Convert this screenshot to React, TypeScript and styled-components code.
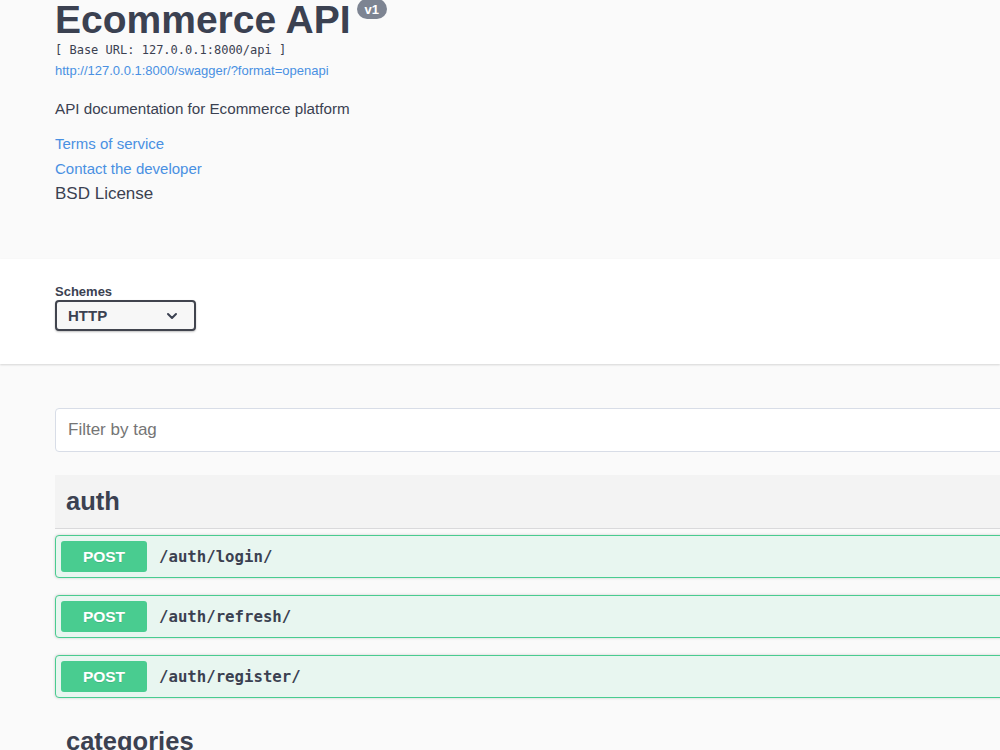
import React from "react";
import styled, { createGlobalStyle } from "styled-components";

const Global = createGlobalStyle`
  html, body { margin: 0; padding: 0; background: #fafafa; }
  body { overflow: hidden; font-family: "Liberation Sans", Arial, sans-serif; color: #3b4151; }
  #root { width: 1000px; height: 750px; overflow: hidden; }
`;

const Page = styled.div`
  width: 1000px;
  display: flex;
  flex-direction: column;
`;

const Wrap = styled.div`
  width: 1200px;
  padding-left: 55px;
  box-sizing: border-box;
`;

const Info = styled(Wrap)`
  padding-bottom: 53px;
`;

const TitleRow = styled.div`
  display: flex;
  align-items: flex-start;
`;

const Title = styled.h2`
  margin: 0;
  font-size: 39px;
  line-height: 40px;
  font-weight: 700;
  color: #3b4151;
`;

const Version = styled.span`
  margin-left: 6px;
  height: 20px;
  padding: 0 8px;
  border-radius: 57px;
  background: #7d8492;
  color: #fff;
  font-size: 13px;
  font-weight: 700;
  box-sizing: border-box;
  display: inline-flex;
  align-items: center;
  position: relative;
  top: -1px;
`;

const BaseUrl = styled.pre`
  margin: 2px 0 0;
  font-family: "DejaVu Sans Mono", "Liberation Mono", monospace;
  font-size: 12px;
  line-height: 16px;
  color: #3b4151;
`;

const Link = styled.a<{ $size?: number }>`
  display: block;
  color: #4990e2;
  text-decoration: none;
  font-size: ${(p) => p.$size ?? 15}px;
`;

const SpecLink = styled(Link)`
  margin-top: 4px;
  line-height: 18px;
`;

const Description = styled.p`
  margin: 19px 0 0;
  font-size: 15.2px;
  line-height: 20px;
  color: #3b4151;
`;

const ContactBlock = styled.div`
  margin-top: 12px;
  display: flex;
  flex-direction: column;
`;

const ContactLink = styled(Link)`
  line-height: 25px;
`;

const License = styled.div`
  font-size: 17px;
  line-height: 25px;
  color: #3b4151;
`;

const SchemeContainer = styled.div`
  background: #fff;
  box-shadow: 0 1px 2px 0 rgba(0, 0, 0, 0.15);
  padding: 25px 0 33px 55px;
`;

const SchemeLabel = styled.div`
  font-size: 13px;
  font-weight: 700;
  line-height: 16px;
  color: #3b4151;
`;

const Select = styled.div`
  width: 141px;
  height: 31px;
  box-sizing: border-box;
  border: 2px solid #41444e;
  border-radius: 4px;
  background: #f7f7f7;
  box-shadow: 0 1px 2px 0 rgba(0, 0, 0, 0.25);
  display: flex;
  align-items: center;
  justify-content: space-between;
  padding: 0 16px 0 11px;
  font-size: 15px;
  font-weight: 700;
  color: #3b4151;
`;

const Body = styled(Wrap)`
  padding-top: 44px;
`;

const Filter = styled.div`
  height: 44px;
  box-sizing: border-box;
  border: 1px solid #d8dde7;
  border-radius: 4px;
  background: #fff;
  display: flex;
  align-items: center;
  padding-left: 12px;
  font-size: 17px;
  color: #757575;
`;

const TagHeader = styled.div<{ $active?: boolean; $gap: number }>`
  margin-top: ${(p) => p.$gap}px;
  height: 54px;
  box-sizing: border-box;
  border-bottom: 1px solid ${(p) => (p.$active ? "#d9d9db" : "transparent")};
  background: ${(p) => (p.$active ? "#f3f3f3" : "transparent")};
  display: flex;
  align-items: center;
  padding-left: 11px;
  font-size: 25.5px;
  font-weight: 700;
  color: #3b4151;
`;

const OpList = styled.div`
  display: flex;
  flex-direction: column;
  gap: 17px;
  margin-top: 6px;
`;

const Op = styled.div`
  height: 43px;
  box-sizing: border-box;
  border: 1px solid #49cc90;
  border-radius: 4px;
  background: #e8f6f0;
  box-shadow: 0 0 3px rgba(0, 0, 0, 0.19);
  display: flex;
  align-items: center;
  padding-left: 5px;
  gap: 12px;
`;

const Method = styled.span`
  width: 86px;
  height: 31px;
  border-radius: 3px;
  background: #49cc90;
  color: #fff;
  font-size: 15.5px;
  font-weight: 700;
  display: flex;
  align-items: center;
  justify-content: center;
  text-shadow: 0 1px 0 rgba(0, 0, 0, 0.1);
`;

const Path = styled.span`
  font-family: "DejaVu Sans Mono", "Liberation Mono", monospace;
  font-size: 15.7px;
  font-weight: 700;
  color: #3b4151;
`;

const Chevron = () => (
  <svg width="12" height="8" viewBox="0 0 12 8" fill="none">
    <path d="M2 2l4 4 4-4" stroke="#3b4151" strokeWidth="2" strokeLinecap="round" strokeLinejoin="round" />
  </svg>
);

const ops = ["/auth/login/", "/auth/refresh/", "/auth/register/"];

export default function App() {
  return (
    <Page>
      <Global />
      <Info>
        <TitleRow>
          <Title>Ecommerce API</Title>
          <Version>v1</Version>
        </TitleRow>
        <BaseUrl>[ Base URL: 127.0.0.1:8000/api ]</BaseUrl>
        <SpecLink href="#" $size={13}>http://127.0.0.1:8000/swagger/?format=openapi</SpecLink>
        <Description>API documentation for Ecommerce platform</Description>
        <ContactBlock>
          <ContactLink href="#">Terms of service</ContactLink>
          <ContactLink href="#">Contact the developer</ContactLink>
          <License>BSD License</License>
        </ContactBlock>
      </Info>
      <SchemeContainer>
        <SchemeLabel>Schemes</SchemeLabel>
        <Select>
          <span>HTTP</span>
          <Chevron />
        </Select>
      </SchemeContainer>
      <Body>
        <Filter>Filter by tag</Filter>
        <TagHeader $active $gap={23}>auth</TagHeader>
        <OpList>
          {ops.map((p) => (
            <Op key={p}>
              <Method>POST</Method>
              <Path>{p}</Path>
            </Op>
          ))}
        </OpList>
        <TagHeader $gap={17}>categories</TagHeader>
      </Body>
    </Page>
  );
}
